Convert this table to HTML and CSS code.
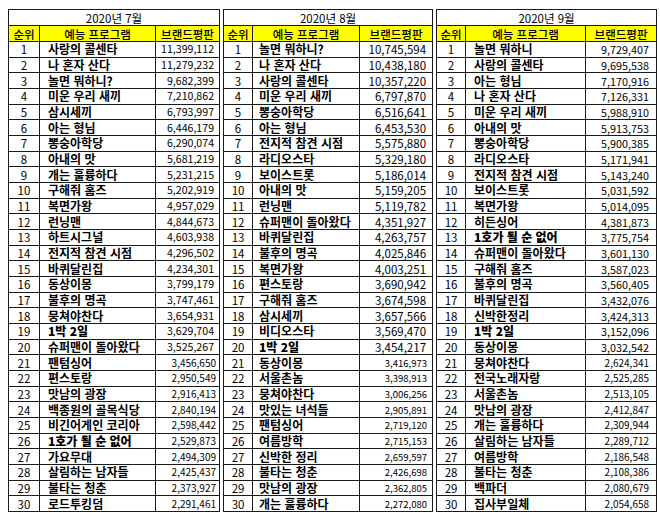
FILE: index.html
```html
<!DOCTYPE html>
<html lang="ko">
<head>
<meta charset="utf-8">
<link rel="stylesheet" href="styles.css">
</head>
<body>
<div class="page">
<table class="rank t1">
<colgroup><col class="c-rank"><col class="c-name"><col class="c-val"></colgroup>
<tr class="title"><th colspan="3">2020년 7월</th></tr>
<tr class="head"><th>순위</th><th>예능 프로그램</th><th>브랜드평판</th></tr>
<tr><td class="no">1</td><td class="nm">사랑의 콜센타</td><td class="v">11,399,112</td></tr>
<tr><td class="no">2</td><td class="nm">나 혼자 산다</td><td class="v">11,279,232</td></tr>
<tr><td class="no">3</td><td class="nm">놀면 뭐하니?</td><td class="v">9,682,399</td></tr>
<tr><td class="no">4</td><td class="nm">미운 우리 새끼</td><td class="v">7,210,862</td></tr>
<tr><td class="no">5</td><td class="nm">삼시세끼</td><td class="v">6,793,997</td></tr>
<tr><td class="no">6</td><td class="nm">아는 형님</td><td class="v">6,446,179</td></tr>
<tr><td class="no">7</td><td class="nm">뽕숭아학당</td><td class="v">6,290,074</td></tr>
<tr><td class="no">8</td><td class="nm">아내의 맛</td><td class="v">5,681,219</td></tr>
<tr><td class="no">9</td><td class="nm">개는 훌륭하다</td><td class="v">5,231,215</td></tr>
<tr><td class="no">10</td><td class="nm">구해줘 홈즈</td><td class="v">5,202,919</td></tr>
<tr><td class="no">11</td><td class="nm">복면가왕</td><td class="v">4,957,029</td></tr>
<tr><td class="no">12</td><td class="nm">런닝맨</td><td class="v">4,844,673</td></tr>
<tr><td class="no">13</td><td class="nm">하트시그널</td><td class="v">4,603,938</td></tr>
<tr><td class="no">14</td><td class="nm">전지적 참견 시점</td><td class="v">4,296,502</td></tr>
<tr><td class="no">15</td><td class="nm">바퀴달린집</td><td class="v">4,234,301</td></tr>
<tr><td class="no">16</td><td class="nm">동상이몽</td><td class="v">3,799,179</td></tr>
<tr><td class="no">17</td><td class="nm">불후의 명곡</td><td class="v">3,747,461</td></tr>
<tr><td class="no">18</td><td class="nm">뭉쳐야찬다</td><td class="v">3,654,931</td></tr>
<tr><td class="no">19</td><td class="nm heavy">1박 2일</td><td class="v">3,629,704</td></tr>
<tr><td class="no">20</td><td class="nm">슈퍼맨이 돌아왔다</td><td class="v">3,525,267</td></tr>
<tr><td class="no">21</td><td class="nm">팬텀싱어</td><td class="v sm">3,456,650</td></tr>
<tr><td class="no">22</td><td class="nm">편스토랑</td><td class="v sm">2,950,549</td></tr>
<tr><td class="no">23</td><td class="nm">맛남의 광장</td><td class="v sm">2,916,413</td></tr>
<tr><td class="no">24</td><td class="nm">백종원의 골목식당</td><td class="v sm">2,840,194</td></tr>
<tr><td class="no">25</td><td class="nm">비긴어게인 코리아</td><td class="v sm">2,598,442</td></tr>
<tr><td class="no">26</td><td class="nm heavy">1호가 될 순 없어</td><td class="v sm">2,529,873</td></tr>
<tr><td class="no">27</td><td class="nm">가요무대</td><td class="v sm">2,494,309</td></tr>
<tr><td class="no">28</td><td class="nm">살림하는 남자들</td><td class="v sm">2,425,437</td></tr>
<tr><td class="no">29</td><td class="nm">불타는 청춘</td><td class="v sm">2,373,927</td></tr>
<tr><td class="no">30</td><td class="nm">로드투킹덤</td><td class="v sm">2,291,461</td></tr>
</table>

<table class="rank t2">
<colgroup><col class="c-rank"><col class="c-name"><col class="c-val"></colgroup>
<tr class="title"><th colspan="3">2020년 8월</th></tr>
<tr class="head"><th>순위</th><th>예능 프로그램</th><th>브랜드평판</th></tr>
<tr><td class="no">1</td><td class="nm">놀면 뭐하니?</td><td class="v">10,745,594</td></tr>
<tr><td class="no">2</td><td class="nm">나 혼자 산다</td><td class="v">10,438,180</td></tr>
<tr><td class="no">3</td><td class="nm">사랑의 콜센타</td><td class="v">10,357,220</td></tr>
<tr><td class="no">4</td><td class="nm">미운 우리 새끼</td><td class="v">6,797,870</td></tr>
<tr><td class="no">5</td><td class="nm">뽕숭아학당</td><td class="v">6,516,641</td></tr>
<tr><td class="no">6</td><td class="nm">아는 형님</td><td class="v">6,453,530</td></tr>
<tr><td class="no">7</td><td class="nm">전지적 참견 시점</td><td class="v">5,575,880</td></tr>
<tr><td class="no">8</td><td class="nm">라디오스타</td><td class="v">5,329,180</td></tr>
<tr><td class="no">9</td><td class="nm">보이스트롯</td><td class="v">5,186,014</td></tr>
<tr><td class="no">10</td><td class="nm">아내의 맛</td><td class="v">5,159,205</td></tr>
<tr><td class="no">11</td><td class="nm">런닝맨</td><td class="v">5,119,782</td></tr>
<tr><td class="no">12</td><td class="nm">슈퍼맨이 돌아왔다</td><td class="v">4,351,927</td></tr>
<tr><td class="no">13</td><td class="nm">바퀴달린집</td><td class="v">4,263,757</td></tr>
<tr><td class="no">14</td><td class="nm">불후의 명곡</td><td class="v">4,025,846</td></tr>
<tr><td class="no">15</td><td class="nm">복면가왕</td><td class="v">4,003,251</td></tr>
<tr><td class="no">16</td><td class="nm">편스토랑</td><td class="v">3,690,942</td></tr>
<tr><td class="no">17</td><td class="nm">구해줘 홈즈</td><td class="v">3,674,598</td></tr>
<tr><td class="no">18</td><td class="nm">삼시세끼</td><td class="v">3,657,566</td></tr>
<tr><td class="no">19</td><td class="nm">비디오스타</td><td class="v">3,569,470</td></tr>
<tr><td class="no">20</td><td class="nm heavy">1박 2일</td><td class="v">3,454,217</td></tr>
<tr><td class="no">21</td><td class="nm">동상이몽</td><td class="v sm">3,416,973</td></tr>
<tr><td class="no">22</td><td class="nm">서울촌놈</td><td class="v sm">3,398,913</td></tr>
<tr><td class="no">23</td><td class="nm">뭉쳐야찬다</td><td class="v sm">3,006,256</td></tr>
<tr><td class="no">24</td><td class="nm">맛있는 녀석들</td><td class="v sm">2,905,891</td></tr>
<tr><td class="no">25</td><td class="nm">팬텀싱어</td><td class="v sm">2,719,120</td></tr>
<tr><td class="no">26</td><td class="nm">여름방학</td><td class="v sm">2,715,153</td></tr>
<tr><td class="no">27</td><td class="nm">신박한 정리</td><td class="v sm">2,659,597</td></tr>
<tr><td class="no">28</td><td class="nm">불타는 청춘</td><td class="v sm">2,426,698</td></tr>
<tr><td class="no">29</td><td class="nm">맛남의 광장</td><td class="v sm">2,362,805</td></tr>
<tr><td class="no">30</td><td class="nm">개는 훌륭하다</td><td class="v sm">2,272,080</td></tr>
</table>

<table class="rank t3">
<colgroup><col class="c-rank"><col class="c-name"><col class="c-val"></colgroup>
<tr class="title"><th colspan="3">2020년 9월</th></tr>
<tr class="head"><th>순위</th><th>예능 프로그램</th><th>브랜드평판</th></tr>
<tr><td class="no">1</td><td class="nm">놀면 뭐하니</td><td class="v">9,729,407</td></tr>
<tr><td class="no">2</td><td class="nm">사랑의 콜센타</td><td class="v">9,695,538</td></tr>
<tr><td class="no">3</td><td class="nm">아는 형님</td><td class="v">7,170,916</td></tr>
<tr><td class="no">4</td><td class="nm">나 혼자 산다</td><td class="v">7,126,331</td></tr>
<tr><td class="no">5</td><td class="nm">미운 우리 새끼</td><td class="v">5,988,910</td></tr>
<tr><td class="no">6</td><td class="nm">아내의 맛</td><td class="v">5,913,753</td></tr>
<tr><td class="no">7</td><td class="nm">뽕숭아학당</td><td class="v">5,900,385</td></tr>
<tr><td class="no">8</td><td class="nm">라디오스타</td><td class="v">5,171,941</td></tr>
<tr><td class="no">9</td><td class="nm">전지적 참견 시점</td><td class="v">5,143,240</td></tr>
<tr><td class="no">10</td><td class="nm">보이스트롯</td><td class="v">5,031,592</td></tr>
<tr><td class="no">11</td><td class="nm">복면가왕</td><td class="v">5,014,095</td></tr>
<tr><td class="no">12</td><td class="nm">히든싱어</td><td class="v">4,381,873</td></tr>
<tr><td class="no">13</td><td class="nm heavy">1호가 될 순 없어</td><td class="v">3,775,754</td></tr>
<tr><td class="no">14</td><td class="nm">슈퍼맨이 돌아왔다</td><td class="v">3,601,130</td></tr>
<tr><td class="no">15</td><td class="nm">구해줘 홈즈</td><td class="v">3,587,023</td></tr>
<tr><td class="no">16</td><td class="nm">불후의 명곡</td><td class="v">3,560,405</td></tr>
<tr><td class="no">17</td><td class="nm">바퀴달린집</td><td class="v">3,432,076</td></tr>
<tr><td class="no">18</td><td class="nm">신박한정리</td><td class="v">3,424,313</td></tr>
<tr><td class="no">19</td><td class="nm heavy">1박 2일</td><td class="v">3,152,096</td></tr>
<tr><td class="no">20</td><td class="nm">동상이몽</td><td class="v">3,032,542</td></tr>
<tr><td class="no">21</td><td class="nm">뭉쳐야찬다</td><td class="v sm">2,624,341</td></tr>
<tr><td class="no">22</td><td class="nm">전국노래자랑</td><td class="v sm">2,525,285</td></tr>
<tr><td class="no">23</td><td class="nm">서울촌놈</td><td class="v sm">2,513,105</td></tr>
<tr><td class="no">24</td><td class="nm">맛남의 광장</td><td class="v sm">2,412,847</td></tr>
<tr><td class="no">25</td><td class="nm">개는 훌륭하다</td><td class="v sm">2,309,944</td></tr>
<tr><td class="no">26</td><td class="nm">살림하는 남자들</td><td class="v sm">2,289,712</td></tr>
<tr><td class="no">27</td><td class="nm">여름방학</td><td class="v sm">2,186,548</td></tr>
<tr><td class="no">28</td><td class="nm">불타는 청춘</td><td class="v sm">2,108,386</td></tr>
<tr><td class="no">29</td><td class="nm">백파더</td><td class="v sm">2,080,679</td></tr>
<tr><td class="no">30</td><td class="nm">집사부일체</td><td class="v sm">2,054,658</td></tr>
</table>
</div>
</body>
</html>
```

FILE: styles.css
```css
html, body {
  margin: 0;
  padding: 0;
  background: #ffffff;
}
body {
  font-family: "Noto Sans CJK KR", "Noto Sans", sans-serif;
  color: #000;
  font-size: 11px;
}
.page {
  display: flex;
  align-items: flex-start;
  gap: 3px;
  padding: 9px 0 0 8px;
}
.rank {
  border-collapse: collapse;
  table-layout: fixed;
  border: 1px solid #000;
}
.rank th,
.rank td {
  border: 1px solid #1a1a1a;
  padding: 0;
  line-height: 14px;
  white-space: nowrap;
  overflow: hidden;
}
.rank tr {
  height: 15.68px;
}
.rank tr.title,
.rank tr.head {
  height: 16px;
}
.title th {
  font-weight: 400;
  font-size: 11.5px;
  text-align: center;
}
.head th {
  background: #ffff00;
  font-weight: 500;
  font-size: 11.5px;
  text-align: center;
}
.no {
  text-align: center;
  font-size: 11.5px;
}
.nm {
  font-weight: 700;
  font-size: 12px;
  padding-left: 8px !important;
  text-align: left;
}
.nm.heavy {
  font-weight: 900;
}
.v {
  text-align: right;
  font-size: 10.6px;
  padding-right: 5px !important;
}
.v.sm {
  font-size: 10px;
  padding-right: 3px !important;
}

.t1 { width: 211px; }
.t1 .c-rank { width: 31px; }
.t1 .c-name { width: 116px; }
.t1 .c-val { width: 64px; }

.t2 { width: 209px; }
.t2 .c-rank { width: 29px; }
.t2 .c-name { width: 107px; }
.t2 .c-val { width: 73px; }
.t2 .v { font-size: 11.5px; padding-right: 6px !important; }
.t2 .v.sm { font-size: 9.5px; padding-right: 5px !important; }
.t2 .nm { padding-left: 6px !important; }

.t3 { width: 220px; }
.t3 .c-rank { width: 29px; }
.t3 .c-name { width: 120px; }
.t3 .c-val { width: 71px; }
.t3 .v { font-size: 10.8px; padding-right: 7px !important; }
.t3 .v.sm { font-size: 10px; padding-right: 7px !important; }
.t3 .nm { padding-left: 8px !important; }
```
